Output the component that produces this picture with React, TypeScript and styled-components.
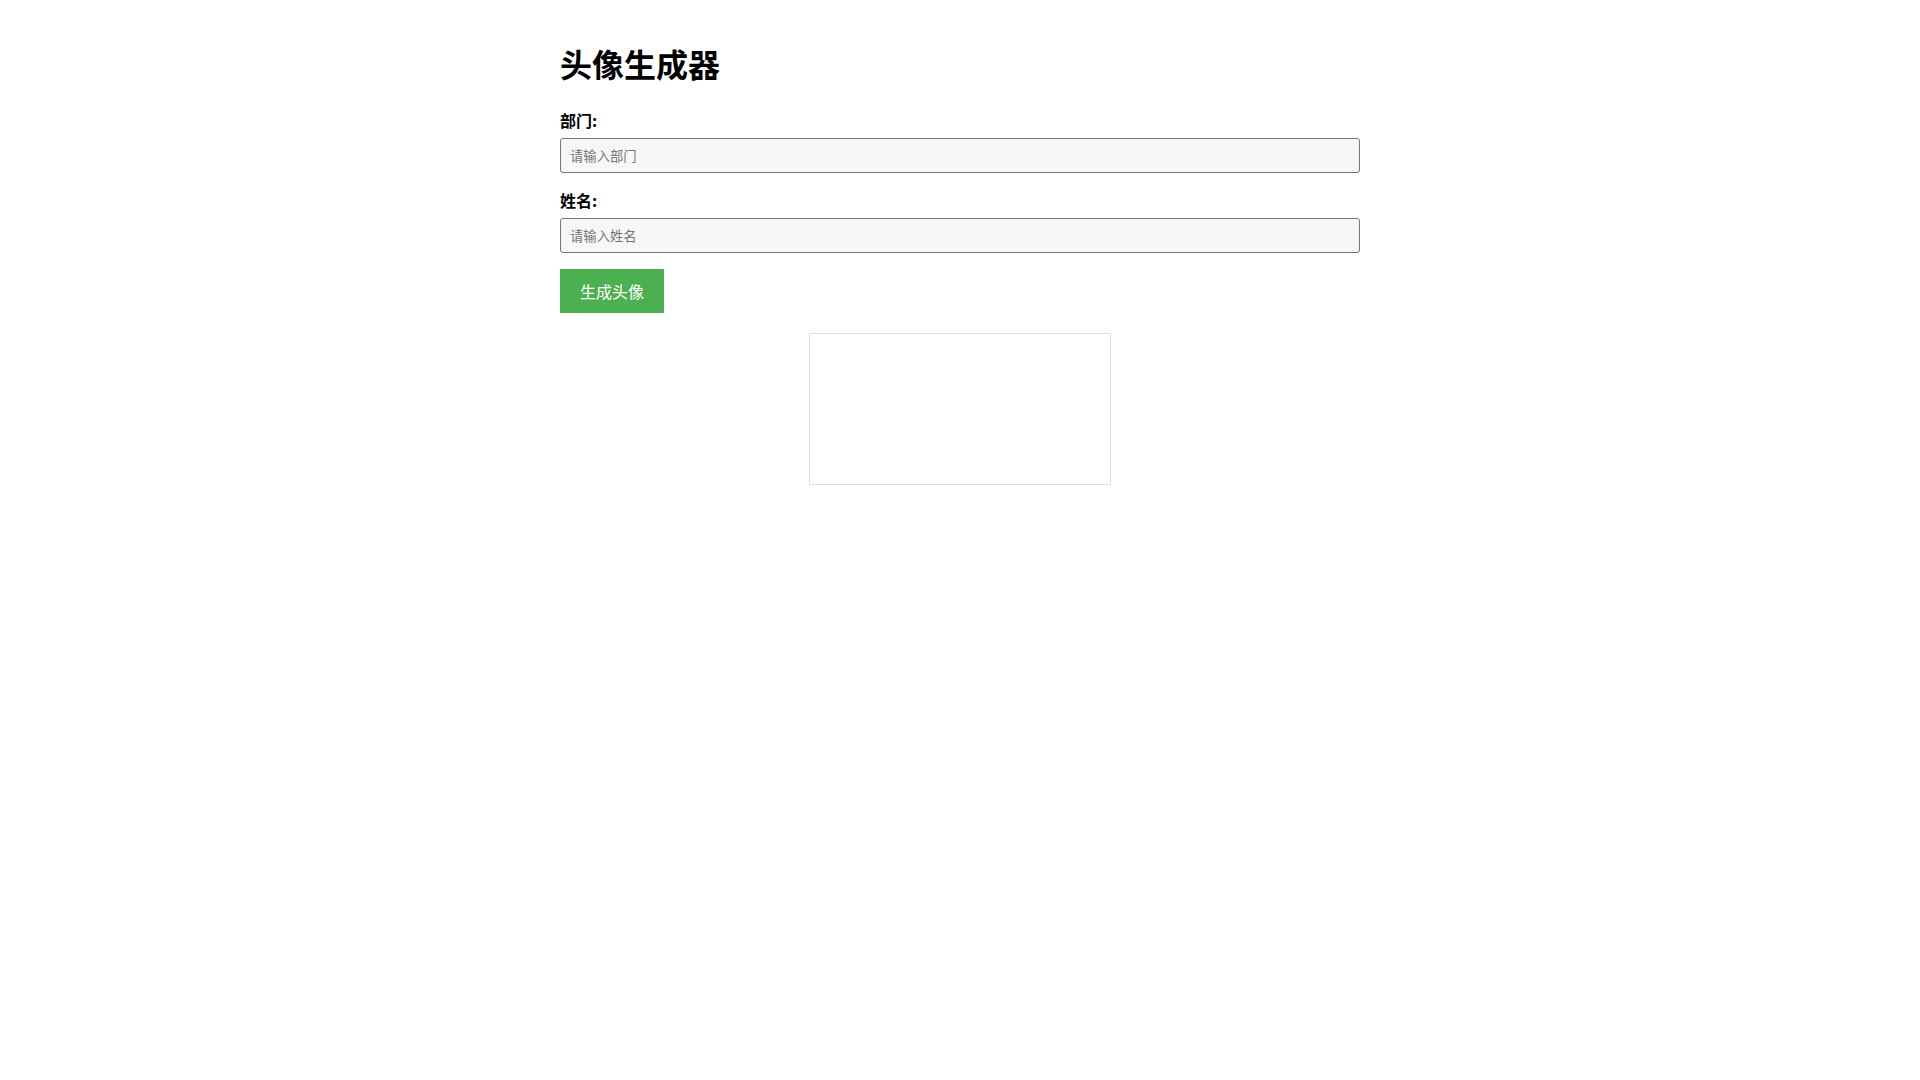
import React from "react";
import styled, { createGlobalStyle } from "styled-components";

const GlobalStyle = createGlobalStyle`
  html, body {
    margin: 0;
    padding: 0;
    background: #ffffff;
  }
  body {
    font-family: "Noto Sans CJK SC", "Liberation Sans", Arial, sans-serif;
    color: #000;
  }
`;

const Container = styled.div`
  max-width: 800px;
  margin: 0 auto;
  padding: 20px 0;
`;

const Title = styled.h1`
  font-size: 32px;
  line-height: 45px;
  font-weight: 700;
  margin: 21.44px 0 22px;
`;

const FormGroup = styled.div<{ $last?: boolean }>`
  margin-bottom: ${(p) => (p.$last ? "0" : "15px")};
`;

const Label = styled.label`
  display: block;
  font-size: 16px;
  line-height: 25px;
  font-weight: 700;
  margin-bottom: 5px;
`;

const Input = styled.input`
  display: block;
  width: 100%;
  height: 35px;
  box-sizing: border-box;
  padding: 8px 9px;
  font-family: "Noto Sans CJK SC", "Liberation Sans", Arial, sans-serif;
  font-size: 13.333px;
  line-height: 17px;
  background: #f7f7f7;
  border: 1px solid #767676;
  border-radius: 3px;
  color: #000;
  outline: none;
  &::placeholder {
    color: #757575;
  }
`;

const Button = styled.button`
  display: block;
  margin-top: 16px;
  padding: 12px 20px;
  line-height: 20px;
  background: #4caf50;
  color: #ffffff;
  border: none;
  font-family: "Noto Sans CJK SC", "Liberation Sans", Arial, sans-serif;
  font-size: 16px;
  cursor: pointer;
`;

const Canvas = styled.canvas`
  display: block;
  margin: 20px auto 0;
  border: 1px solid #ddd;
`;

export default function App() {
  return (
    <>
      <GlobalStyle />
      <Container>
        <Title>头像生成器</Title>
        <FormGroup>
          <Label htmlFor="dept">部门:</Label>
          <Input id="dept" type="text" placeholder="请输入部门" />
        </FormGroup>
        <FormGroup $last>
          <Label htmlFor="name">姓名:</Label>
          <Input id="name" type="text" placeholder="请输入姓名" />
        </FormGroup>
        <Button type="button">生成头像</Button>
        <Canvas width={300} height={150} />
      </Container>
    </>
  );
}
